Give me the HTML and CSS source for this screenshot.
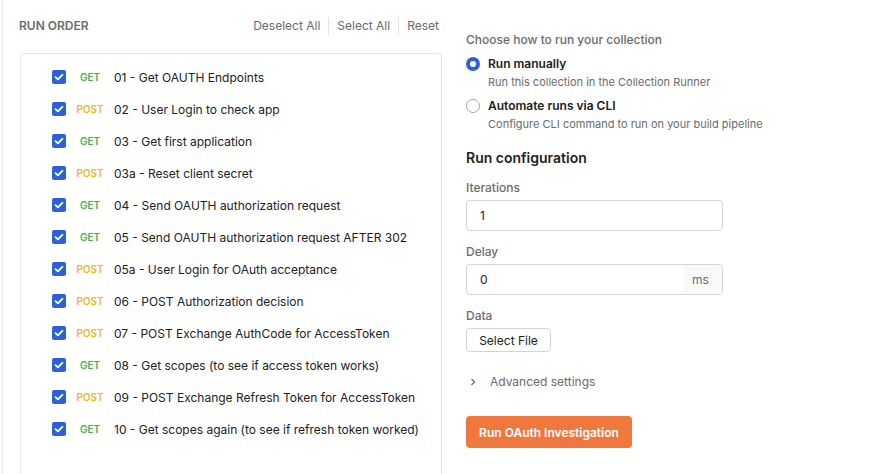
FILE: index.html
```html
<!DOCTYPE html>
<html>
<head>
<meta charset="utf-8">
<link rel="stylesheet" href="styles.css">
</head>
<body>
<div class="page">
  <section class="left">
    <div class="order-head">
      <span class="order-title">RUN ORDER</span>
      <div class="order-actions">
        <span class="action">Deselect All</span>
        <span class="sep"></span>
        <span class="action">Select All</span>
        <span class="sep"></span>
        <span class="action">Reset</span>
      </div>
    </div>
    <div class="list">
      <div class="row"><span class="cb"><svg viewBox="0 0 14 14"><path d="M3.6 7.2l2.3 2.2 4.5-4.6"/></svg></span><span class="method get">GET</span><span class="name">01 - Get OAUTH Endpoints</span></div>
      <div class="row"><span class="cb"><svg viewBox="0 0 14 14"><path d="M3.6 7.2l2.3 2.2 4.5-4.6"/></svg></span><span class="method post">POST</span><span class="name">02 - User Login to check app</span></div>
      <div class="row"><span class="cb"><svg viewBox="0 0 14 14"><path d="M3.6 7.2l2.3 2.2 4.5-4.6"/></svg></span><span class="method get">GET</span><span class="name">03 - Get first application</span></div>
      <div class="row"><span class="cb"><svg viewBox="0 0 14 14"><path d="M3.6 7.2l2.3 2.2 4.5-4.6"/></svg></span><span class="method post">POST</span><span class="name">03a - Reset client secret</span></div>
      <div class="row"><span class="cb"><svg viewBox="0 0 14 14"><path d="M3.6 7.2l2.3 2.2 4.5-4.6"/></svg></span><span class="method get">GET</span><span class="name">04 - Send OAUTH authorization request</span></div>
      <div class="row"><span class="cb"><svg viewBox="0 0 14 14"><path d="M3.6 7.2l2.3 2.2 4.5-4.6"/></svg></span><span class="method get">GET</span><span class="name">05 - Send OAUTH authorization request AFTER 302</span></div>
      <div class="row"><span class="cb"><svg viewBox="0 0 14 14"><path d="M3.6 7.2l2.3 2.2 4.5-4.6"/></svg></span><span class="method post">POST</span><span class="name">05a - User Login for OAuth acceptance</span></div>
      <div class="row"><span class="cb"><svg viewBox="0 0 14 14"><path d="M3.6 7.2l2.3 2.2 4.5-4.6"/></svg></span><span class="method post">POST</span><span class="name">06 - POST Authorization decision</span></div>
      <div class="row"><span class="cb"><svg viewBox="0 0 14 14"><path d="M3.6 7.2l2.3 2.2 4.5-4.6"/></svg></span><span class="method post">POST</span><span class="name">07 - POST Exchange AuthCode for AccessToken</span></div>
      <div class="row"><span class="cb"><svg viewBox="0 0 14 14"><path d="M3.6 7.2l2.3 2.2 4.5-4.6"/></svg></span><span class="method get">GET</span><span class="name">08 - Get scopes (to see if access token works)</span></div>
      <div class="row"><span class="cb"><svg viewBox="0 0 14 14"><path d="M3.6 7.2l2.3 2.2 4.5-4.6"/></svg></span><span class="method post">POST</span><span class="name">09 - POST Exchange Refresh Token for AccessToken</span></div>
      <div class="row"><span class="cb"><svg viewBox="0 0 14 14"><path d="M3.6 7.2l2.3 2.2 4.5-4.6"/></svg></span><span class="method get">GET</span><span class="name">10 - Get scopes again (to see if refresh token worked)</span></div>
    </div>
  </section>

  <section class="right">
    <div class="choose">Choose how to run your collection</div>
    <div class="option">
      <div class="opt-label"><span class="radio checked"></span>Run manually</div>
      <div class="opt-desc">Run this collection in the Collection Runner</div>
    </div>
    <div class="option">
      <div class="opt-label"><span class="radio"></span>Automate runs via CLI</div>
      <div class="opt-desc">Configure CLI command to run on your build pipeline</div>
    </div>

    <div class="config-title">Run configuration</div>

    <div class="field-label first-label">Iterations</div>
    <div class="input"><span class="value">1</span></div>

    <div class="field-label">Delay</div>
    <div class="input"><span class="value">0</span><span class="suffix">ms</span></div>

    <div class="field-label">Data</div>
    <div class="file-btn">Select File</div>

    <div class="advanced">
      <svg class="chev" viewBox="0 0 8 10"><path d="M2.5 2l3 3-3 3"/></svg>
      <span>Advanced settings</span>
    </div>

    <div class="run-btn">Run OAuth Investigation</div>
  </section>
</div>
</body>
</html>
```

FILE: styles.css
```css
* { box-sizing: border-box; }

html, body {
  margin: 0;
  padding: 0;
  background: #ffffff;
}

body {
  font-family: Inter, "Noto Sans", "Liberation Sans", sans-serif;
  font-size: 12px;
  color: #212121;
  overflow: hidden;
  height: 474px;
}

.page {
  display: flex;
  margin-left: 2px;
  border-left: 1px solid #ededed;
  height: 474px;
  overflow: hidden;
}

/* LEFT */
.left {
  width: 439px;
  padding-left: 16px;
  flex-shrink: 0;
}

.order-head {
  display: flex;
  align-items: center;
  justify-content: space-between;
  padding-top: 17px;
  height: 35px;
  padding-right: 3px;
}

.order-title {
  font-weight: 600;
  font-size: 12px;
  color: #6b6b6b;
  line-height: 18px;
}

.order-actions {
  display: flex;
  align-items: center;
  color: #6b6b6b;
  line-height: 18px;
}

.action { font-size: 12px; }

.sep {
  width: 1px;
  height: 18px;
  background: #e6e6e6;
  margin: 0 8px;
}

.list {
  margin-top: 18px;
  margin-left: 1px;
  border: 1px solid #e6e6e6;
  border-radius: 4px;
  padding: 7px 0 60px 31px;
}

.row {
  display: flex;
  align-items: center;
  height: 32px;
}

.cb {
  width: 14px;
  height: 14px;
  border-radius: 2px;
  background: #2d62d6;
  display: flex;
  flex-shrink: 0;
}

.cb svg {
  width: 14px;
  height: 14px;
  fill: none;
  stroke: #ffffff;
  stroke-width: 1.8;
  stroke-linecap: round;
  stroke-linejoin: round;
}

.method {
  width: 32px;
  margin: 0 8px;
  text-align: center;
  font-size: 10px;
  font-weight: 600;
}

.method.get { color: #45b052; }
.method.post { color: #f4b31c; }

.name {
  font-size: 12px;
  color: #212121;
  white-space: nowrap;
}

/* RIGHT */
.right {
  margin-left: 24px;
  padding-top: 32px;
  width: 300px;
  flex-shrink: 0;
}

.choose {
  line-height: 16px;
  color: #6b6b6b;
  font-weight: 500;
}

.option { margin-top: 8px; }

.opt-label {
  display: flex;
  align-items: center;
  line-height: 16px;
  font-weight: 600;
  color: #212121;
}

.radio {
  width: 14px;
  height: 14px;
  border-radius: 50%;
  border: 1px solid #a6a6a6;
  margin-right: 8px;
  flex-shrink: 0;
}

.radio.checked {
  border: 4px solid #2d62d6;
}

.opt-desc {
  margin-top: 2px;
  margin-left: 22px;
  line-height: 16px;
  font-size: 11px;
  color: #6b6b6b;
}

.config-title {
  margin-top: 16px;
  font-size: 14px;
  font-weight: 600;
  line-height: 20px;
  color: #212121;
}

.field-label {
  margin-top: 13px;
  line-height: 16px;
  font-weight: 500;
  color: #6b6b6b;
}

.field-label.first-label { margin-top: 12px; }

.input {
  margin-top: 4px;
  width: 257px;
  height: 31px;
  border: 1px solid #d4d4d4;
  border-radius: 4px;
  display: flex;
  align-items: stretch;
  overflow: hidden;
}

.input .value {
  flex: 1;
  display: flex;
  align-items: center;
  padding-left: 13px;
  color: #212121;
}

.input .suffix {
  width: 38px;
  background: #f9f9f9;
  color: #6b6b6b;
  display: flex;
  align-items: center;
  padding-left: 8px;
}

.file-btn {
  margin-top: 4px;
  width: 85px;
  height: 24px;
  border: 1px solid #d4d4d4;
  border-radius: 4px;
  display: flex;
  align-items: center;
  justify-content: center;
  color: #212121;
}

.advanced {
  margin-top: 22px;
  display: flex;
  align-items: center;
  line-height: 16px;
  color: #6b6b6b;
}

.chev {
  width: 8px;
  height: 10px;
  margin-left: 3px;
  margin-right: 13px;
  fill: none;
  stroke: #6b6b6b;
  stroke-width: 1.2;
}

.run-btn {
  margin-top: 26px;
  width: 166px;
  height: 32px;
  border-radius: 4px;
  background: #f0783e;
  color: #ffffff;
  font-weight: 600;
  display: flex;
  align-items: center;
  justify-content: center;
}
```
